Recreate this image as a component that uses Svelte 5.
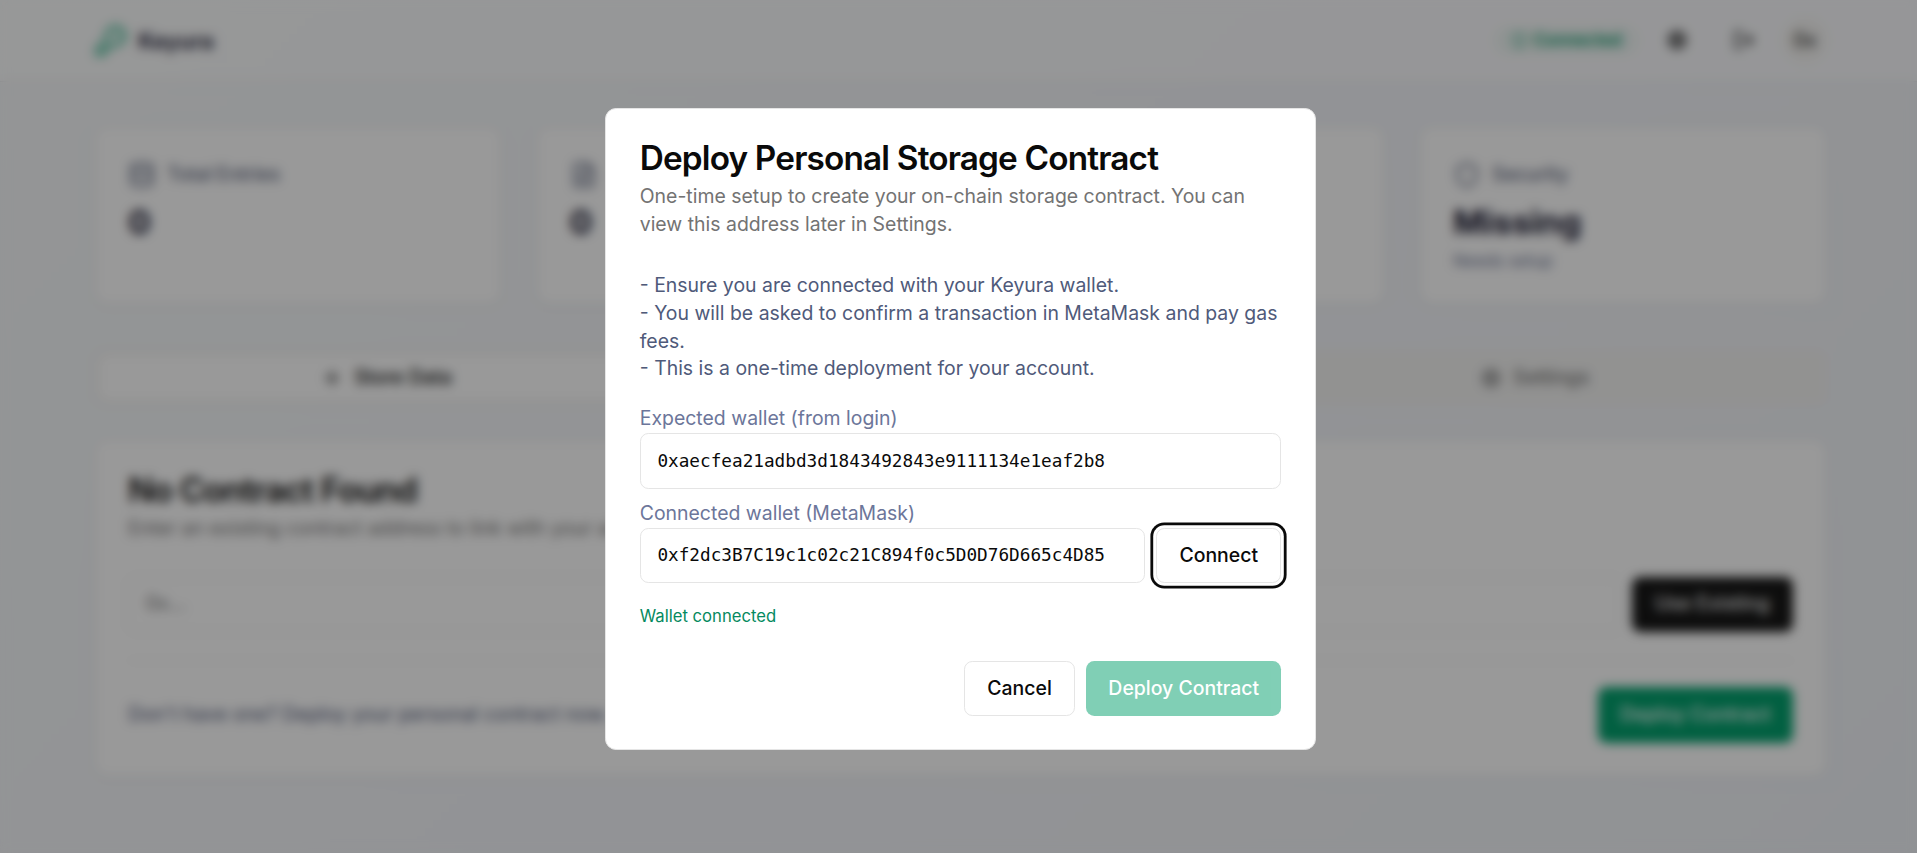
<script>
  const expected = '0xaecfea21adbd3d1843492843e9111134e1eaf2b8';
  const connected = '0xf2dc3B7C19c1c02c21C894f0c5D0D76D665c4D85';
</script>

<div class="page">
  <header class="topbar">
    <div class="container bar">
      <div class="brand">
        <svg class="i24" viewBox="0 0 24 24"><path d="M2.586 17.414A2 2 0 0 0 2 18.828V21a1 1 0 0 0 1 1h3a1 1 0 0 0 1-1v-1a1 1 0 0 1 1-1h1a1 1 0 0 0 1-1v-1a1 1 0 0 1 1-1h.172a2 2 0 0 0 1.414-.586l.814-.814a6.5 6.5 0 1 0-4-4z" /><circle cx="16.5" cy="7.5" r=".5" /></svg>
        <span>Keyura</span>
      </div>
      <div class="tools">
        <span class="pill">
          <svg class="i12" viewBox="0 0 24 24"><path d="M20 13c0 5-3.5 7.5-7.66 8.95a1 1 0 0 1-.67-.01C7.5 20.5 4 18 4 13V6a1 1 0 0 1 1-1c2 0 4.5-1.2 6.24-2.72a1.17 1.17 0 0 1 1.52 0C14.51 3.81 17 5 19 5a1 1 0 0 1 1 1z" /></svg>
          Connected
        </span>
        <span class="ghost">
          <svg class="i16" viewBox="0 0 24 24"><circle cx="12" cy="12" r="8" /><circle cx="12" cy="12" r="3" /><path d="M12 2v4M12 18v4M2 12h4M18 12h4M5 5l2.500 2.500M16.500 16.500 19 19M5 19l2.500-2.500M16.500 7.500 19 5" /></svg>
        </span>
        <span class="ghost">
          <svg class="i16" viewBox="0 0 24 24"><path d="M9 21H5a2 2 0 0 1-2-2V5a2 2 0 0 1 2-2h4M16 17l5-5-5-5M21 12H9" /></svg>
        </span>
        <span class="avatar">0x</span>
      </div>
    </div>
  </header>

  <main class="container main">
    <section class="stats">
      <article class="card stat">
        <div class="stat-head">
          <svg class="i20" viewBox="0 0 24 24"><ellipse cx="12" cy="5" rx="9" ry="3" /><path d="M3 5v14a9 3 0 0 0 18 0V5M3 12a9 3 0 0 0 18 0" /></svg>
          Total Entries
        </div>
        <div class="value">0</div>
      </article>
      <article class="card stat">
        <div class="stat-head">
          <svg class="i20" viewBox="0 0 24 24"><path d="M15 2H6a2 2 0 0 0-2 2v16a2 2 0 0 0 2 2h12a2 2 0 0 0 2-2V7zM14 2v4a2 2 0 0 0 2 2h4M10 9H8M16 13H8M16 17H8" /></svg>
        </div>
        <div class="value">0</div>
      </article>
      <article class="card stat"></article>
      <article class="card stat">
        <div class="stat-head">
          <svg class="i20" viewBox="0 0 24 24"><path d="M20 13c0 5-3.5 7.5-7.66 8.95a1 1 0 0 1-.67-.01C7.5 20.5 4 18 4 13V6a1 1 0 0 1 1-1c2 0 4.5-1.2 6.24-2.72a1.17 1.17 0 0 1 1.52 0C14.51 3.81 17 5 19 5a1 1 0 0 1 1 1z" /></svg>
          Security
        </div>
        <div class="value">Missing</div>
        <div class="note">Needs setup</div>
      </article>
    </section>

    <nav class="tabs">
      <span class="tab active">
        <svg class="i16" viewBox="0 0 24 24"><path d="M5 12h14M12 5v14" /></svg>
        Store Data
      </span>
      <span class="tab"></span>
      <span class="tab">
        <svg class="i16" viewBox="0 0 24 24"><circle cx="12" cy="12" r="8" /><circle cx="12" cy="12" r="3" /><path d="M12 2v4M12 18v4M2 12h4M18 12h4M5 5l2.500 2.500M16.500 16.500 19 19M5 19l2.500-2.500M16.500 7.500 19 5" /></svg>
        Settings
      </span>
    </nav>

    <section class="card contract">
      <h2>No Contract Found</h2>
      <p class="desc">Enter an existing contract address to link with your account.</p>
      <div class="link-row">
        <div class="field grow placeholder">0x...</div>
        <span class="btn dark">Use Existing</span>
      </div>
      <div class="deploy-row">
        <span>Don't have one? Deploy your personal contract now.</span>
        <span class="btn green">Deploy Contract</span>
      </div>
    </section>
  </main>
</div>

<div class="overlay">
  <div class="modal" role="dialog" aria-labelledby="title">
    <h2 id="title">Deploy Personal Storage Contract</h2>
    <p class="desc">One-time setup to create your on-chain storage contract. You can view this address later in Settings.</p>
    <div class="steps">
      <div>- Ensure you are connected with your Keyura wallet.</div>
      <div>- You will be asked to confirm a transaction in MetaMask and pay gas fees.</div>
      <div>- This is a one-time deployment for your account.</div>
    </div>
    <div class="wallets">
      <div>
        <div class="label">Expected wallet (from login)</div>
        <div class="field mono">{expected}</div>
      </div>
      <div>
        <div class="label">Connected wallet (MetaMask)</div>
        <div class="connect-row">
          <div class="field mono grow">{connected}</div>
          <button class="btn outline focused">Connect</button>
        </div>
      </div>
    </div>
    <p class="status">Wallet connected</p>
    <div class="actions">
      <button class="btn outline">Cancel</button>
      <button class="btn green" disabled>Deploy Contract</button>
    </div>
  </div>
</div>

<style>
  :global(html) { font-size: 22.222px; }
  :global(body) { margin: 0; overflow: hidden; font-family: Inter, sans-serif; color: #0a0a0a; }
  * { box-sizing: border-box; }
  h2, p { margin: 0; }
  svg { fill: none; stroke: currentColor; stroke-width: 2; stroke-linecap: round; stroke-linejoin: round; flex: none; }
  .i24 { width: 1.5rem; height: 1.5rem; }
  .i20 { width: 1.25rem; height: 1.25rem; }
  .i16 { width: 1rem; height: 1rem; }
  .i12 { width: .75rem; height: .75rem; }

  .page {
    width: 1921px; height: 853px; overflow: hidden;
    background: linear-gradient(135deg, #f7f9fa 0%, #f4f6fa 50%, #f1f4f8 100%);
    font-size: .875rem; line-height: 1.25rem;
  }
  .container { width: 80rem; margin: 0 auto; padding: 0 1rem; }
  .topbar { height: 82px; background: rgba(255, 255, 255, .6); border-bottom: 1px solid #e8eaee; }
  .bar { height: 100%; display: flex; align-items: center; justify-content: space-between; }
  .brand { display: flex; align-items: center; gap: .5rem; font-size: 1rem; font-weight: 600; color: #16162e; }
  .brand svg { color: #10a878; }
  .tools { display: flex; align-items: center; gap: .5rem; }
  .pill { display: flex; align-items: center; gap: .25rem; padding: .15rem .75rem; border-radius: 2rem; background: #eff6f4; color: #059669; font-size: .75rem; line-height: 1rem; font-weight: 600; }
  .ghost { width: 2.5rem; display: flex; justify-content: center; }
  .avatar { width: 2rem; height: 2rem; border-radius: 50%; display: grid; place-items: center; background: #f5f4f2; }

  .main { padding-top: 2rem; }
  .stats { display: grid; grid-template-columns: repeat(4, 1fr); gap: 1.5rem; }
  .card { background: #fff; border: 1px solid #e2e5e9; border-radius: .6rem; padding: 1.5rem; box-shadow: 0 1px 3px rgba(0, 0, 0, .06); }
  .stat { height: 179px; }
  .stat-head { display: flex; align-items: center; gap: .5rem; height: 1.25rem; font-weight: 500; letter-spacing: -.01em; color: #5f6880; }
  .value { margin-top: .5rem; font-size: 1.5rem; line-height: 2rem; font-weight: 700; color: #16162e; }
  .note { margin-top: .25rem; font-size: .75rem; line-height: 1rem; color: #6c7595; }

  .tabs { margin-top: 2rem; height: 2.5rem; padding: .25rem; display: grid; grid-template-columns: repeat(3, 1fr); background: #f3f3f2; border-radius: .5rem; }
  .tab { display: flex; align-items: center; justify-content: center; gap: .5rem; font-weight: 500; color: #737373; border-radius: .375rem; }
  .tab.active { background: #fff; color: #0a0a0a; }

  .contract { margin-top: 1.53rem; }
  h2 { font-size: 1.5rem; line-height: 1; font-weight: 600; letter-spacing: -.025em; }
  .desc { margin-top: .375rem; font-size: .875rem; line-height: 1.25rem; color: #737373; }
  .link-row { margin-top: 1.5rem; display: flex; gap: .5rem; }
  .placeholder { color: #737373; }
  .deploy-row { margin-top: 1.25rem; padding-top: 1.2rem; border-top: 1px solid #eeeeee; display: flex; align-items: center; justify-content: space-between; color: #4f5978; }
  .grow { flex: 1; }
  .field { height: 2.5rem; display: flex; align-items: center; padding: 0 .75rem; border: 1px solid #e5e5e5; border-radius: .375rem; }
  .btn {
    height: 2.5rem; padding: 0 1rem; display: inline-flex; align-items: center; justify-content: center;
    border: 1px solid transparent; border-radius: .375rem; font: 500 .875rem/1.25rem Inter, sans-serif; white-space: nowrap;
  }
  .dark { background: #171717; color: #fafafa; }
  .green { background: #03a06d; color: #fff; border: 0; }
  .green:disabled { opacity: .5; }
  .outline { background: #fff; border-color: #e5e5e5; color: #0a0a0a; }
  .focused { box-shadow: 0 0 0 2.8px #fff, 0 0 0 5.6px #0a0a0a; }

  .overlay {
    position: fixed; top: 0; left: 0; width: 1921px; height: 858px;
    display: grid; place-items: center;
    background: rgba(0, 0, 0, .4); backdrop-filter: blur(5.56px);
  }
  .modal { width: 32rem; padding: 1.46rem 1.52rem; background: #fff; border: 1px solid #e5e5e5; border-radius: .5rem; }
  .steps { margin-top: 1.5rem; font-size: .875rem; line-height: 1.25rem; color: #4f5a7a; }
  .wallets { margin-top: 1rem; display: grid; gap: .5rem; }
  .label { font-size: .875rem; line-height: 1.25rem; color: #6c769a; }
  .mono { font-family: 'DejaVu Sans Mono', monospace; font-size: 17.72px; }
  .connect-row { display: flex; gap: .5rem; }
  .status { margin-top: 1rem; font-size: .75rem; line-height: 1rem; color: #058a60; }
  .actions { margin-top: 1.5rem; display: flex; justify-content: flex-end; gap: .5rem; }
</style>
